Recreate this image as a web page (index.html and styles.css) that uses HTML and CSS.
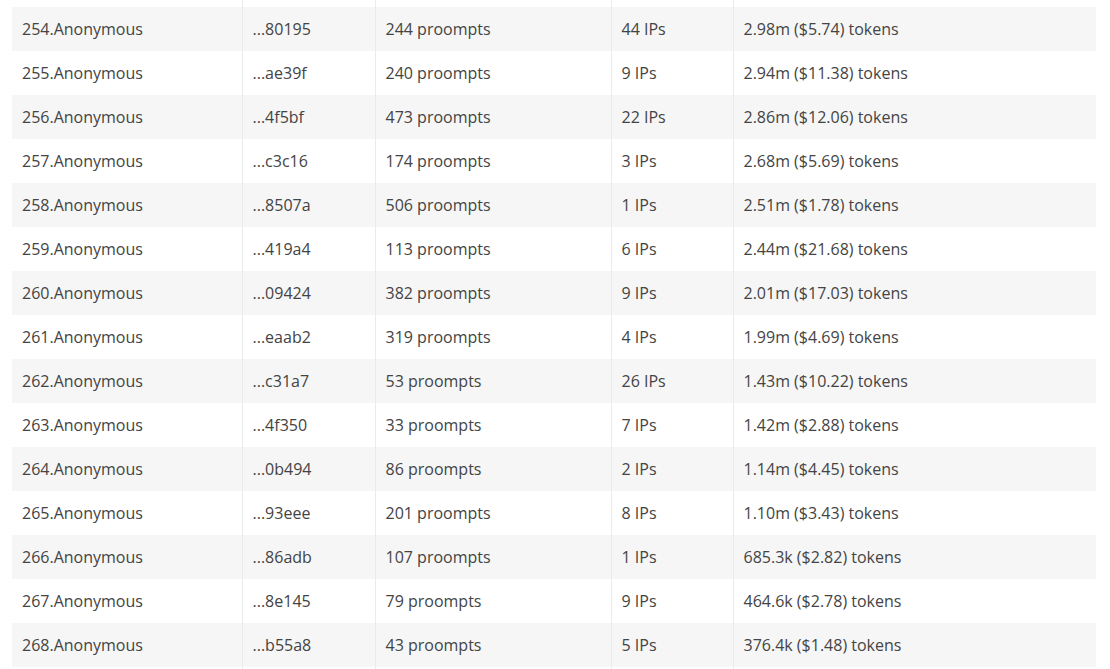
FILE: index.html
```html
<!DOCTYPE html>
<html lang="en">
<head>
<meta charset="utf-8">
<title>Leaderboard</title>
<link rel="stylesheet" href="styles.css">
</head>
<body>
<div class="wrap">
<table class="board">
<colgroup>
<col class="c-user"><col class="c-key"><col class="c-prompts"><col class="c-ips"><col class="c-tokens">
</colgroup>
<tbody>
<tr class="cut"><td></td><td></td><td></td><td></td><td></td></tr>
<tr><td>254.Anonymous</td><td>...80195</td><td>244 proompts</td><td>44 IPs</td><td>2.98m ($5.74) tokens</td></tr>
<tr><td>255.Anonymous</td><td>...ae39f</td><td>240 proompts</td><td>9 IPs</td><td>2.94m ($11.38) tokens</td></tr>
<tr><td>256.Anonymous</td><td>...4f5bf</td><td>473 proompts</td><td>22 IPs</td><td>2.86m ($12.06) tokens</td></tr>
<tr><td>257.Anonymous</td><td>...c3c16</td><td>174 proompts</td><td>3 IPs</td><td>2.68m ($5.69) tokens</td></tr>
<tr><td>258.Anonymous</td><td>...8507a</td><td>506 proompts</td><td>1 IPs</td><td>2.51m ($1.78) tokens</td></tr>
<tr><td>259.Anonymous</td><td>...419a4</td><td>113 proompts</td><td>6 IPs</td><td>2.44m ($21.68) tokens</td></tr>
<tr><td>260.Anonymous</td><td>...09424</td><td>382 proompts</td><td>9 IPs</td><td>2.01m ($17.03) tokens</td></tr>
<tr><td>261.Anonymous</td><td>...eaab2</td><td>319 proompts</td><td>4 IPs</td><td>1.99m ($4.69) tokens</td></tr>
<tr><td>262.Anonymous</td><td>...c31a7</td><td>53 proompts</td><td>26 IPs</td><td>1.43m ($10.22) tokens</td></tr>
<tr><td>263.Anonymous</td><td>...4f350</td><td>33 proompts</td><td>7 IPs</td><td>1.42m ($2.88) tokens</td></tr>
<tr><td>264.Anonymous</td><td>...0b494</td><td>86 proompts</td><td>2 IPs</td><td>1.14m ($4.45) tokens</td></tr>
<tr><td>265.Anonymous</td><td>...93eee</td><td>201 proompts</td><td>8 IPs</td><td>1.10m ($3.43) tokens</td></tr>
<tr><td>266.Anonymous</td><td>...86adb</td><td>107 proompts</td><td>1 IPs</td><td>685.3k ($2.82) tokens</td></tr>
<tr><td>267.Anonymous</td><td>...8e145</td><td>79 proompts</td><td>9 IPs</td><td>464.6k ($2.78) tokens</td></tr>
<tr><td>268.Anonymous</td><td>...b55a8</td><td>43 proompts</td><td>5 IPs</td><td>376.4k ($1.48) tokens</td></tr>
<tr class="tail"><td></td><td></td><td></td><td></td><td></td></tr>
</tbody>
</table>
</div>
</body>
</html>
```

FILE: styles.css
```css
html, body {
  margin: 0;
  padding: 0;
  background: #ffffff;
}

body {
  font-family: "Open Sans", "Noto Sans", sans-serif;
  font-size: 16px;
  color: #444444;
  overflow: hidden;
}

.wrap {
  padding: 0 14px 0 12px;
}

.board {
  width: 1084px;
  table-layout: fixed;
  border-collapse: collapse;
  border-spacing: 0;
}

.c-user { width: 230px; }
.c-key { width: 133px; }
.c-prompts { width: 236px; }
.c-ips { width: 122px; }
.c-tokens { width: 363px; }

.board td {
  padding: 0 10px;
  height: 44px;
  line-height: 24px;
  vertical-align: middle;
  white-space: nowrap;
  border-left: 1px solid #ebebeb;
}

.board td:first-child {
  border-left: none;
}

.board tr:nth-child(even) td {
  background: #f6f6f6;
}

.board tr.cut td {
  height: 7px;
  background: #ffffff;
}

.board tr.tail td {
  height: 20px;
  background: #ffffff;
}
```
